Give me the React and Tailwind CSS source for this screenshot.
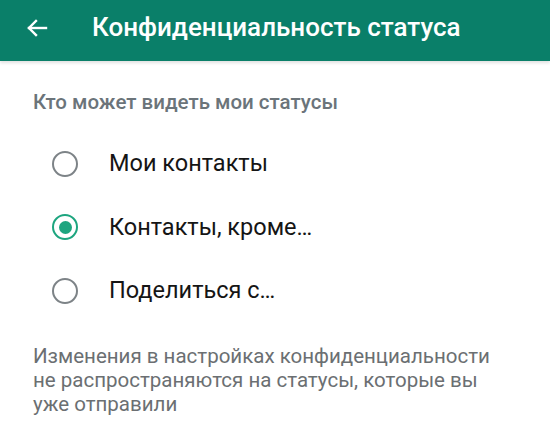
import React, { useState } from 'react';

const options = ['Мои контакты', 'Контакты, кроме…', 'Поделиться с…'];

const Radio = ({ checked }) => (
  <span
    className={`flex items-center justify-center w-[26px] h-[26px] rounded-full border-[2.5px] ${
      checked ? 'border-[#1da57f]' : 'border-[#7d8387]'
    }`}
  >
    {checked && <span className="w-[13px] h-[13px] rounded-full bg-[#1da57f]" />}
  </span>
);

const App = () => {
  const [selected, setSelected] = useState(1);

  return (
    <div className="w-[550px] h-[429px] bg-white overflow-hidden" style={{ fontFamily: 'Roboto, "Noto Sans", sans-serif' }}>
      {/* Шапка */}
      <header className="flex items-center h-[61px] bg-[#0a7f69] text-white shadow-[0_2px_3px_rgba(0,0,0,0.12)]">
        <button className="flex items-center justify-center w-[50px] ml-[12px] -mt-[6px]">
          <svg width="24" height="24" viewBox="0 0 24 24" fill="none" stroke="white" strokeWidth="2.4" strokeLinecap="square">
            <path d="M21 12H4" />
            <path d="M11 5l-7 7 7 7" />
          </svg>
        </button>
        <h1 className="ml-[30px] -mt-[6px] text-[26px] font-medium">Конфиденциальность статуса</h1>
      </header>

      <section className="pt-[28px] px-[33px]">
        <h2 className="text-[20.5px] font-medium text-[#6b747a] leading-[26px]">Кто может видеть мои статусы</h2>
      </section>

      <div className="mt-[17px]">
        {options.map((label, i) => (
          <label
            key={label}
            onClick={() => setSelected(i)}
            className="flex items-center h-[63.5px] pl-[52px] cursor-pointer"
          >
            <Radio checked={selected === i} />
            <span className="ml-[31px] text-[23.5px] text-[#151515]">{label}</span>
          </label>
        ))}
      </div>

      <p className="mt-[21px] px-[33px] text-[20.5px] leading-[24px] text-[#6b6f72]">
        Изменения в настройках конфиденциальности не распространяются на статусы, которые вы уже отправили
      </p>
    </div>
  );
};

export default App;
